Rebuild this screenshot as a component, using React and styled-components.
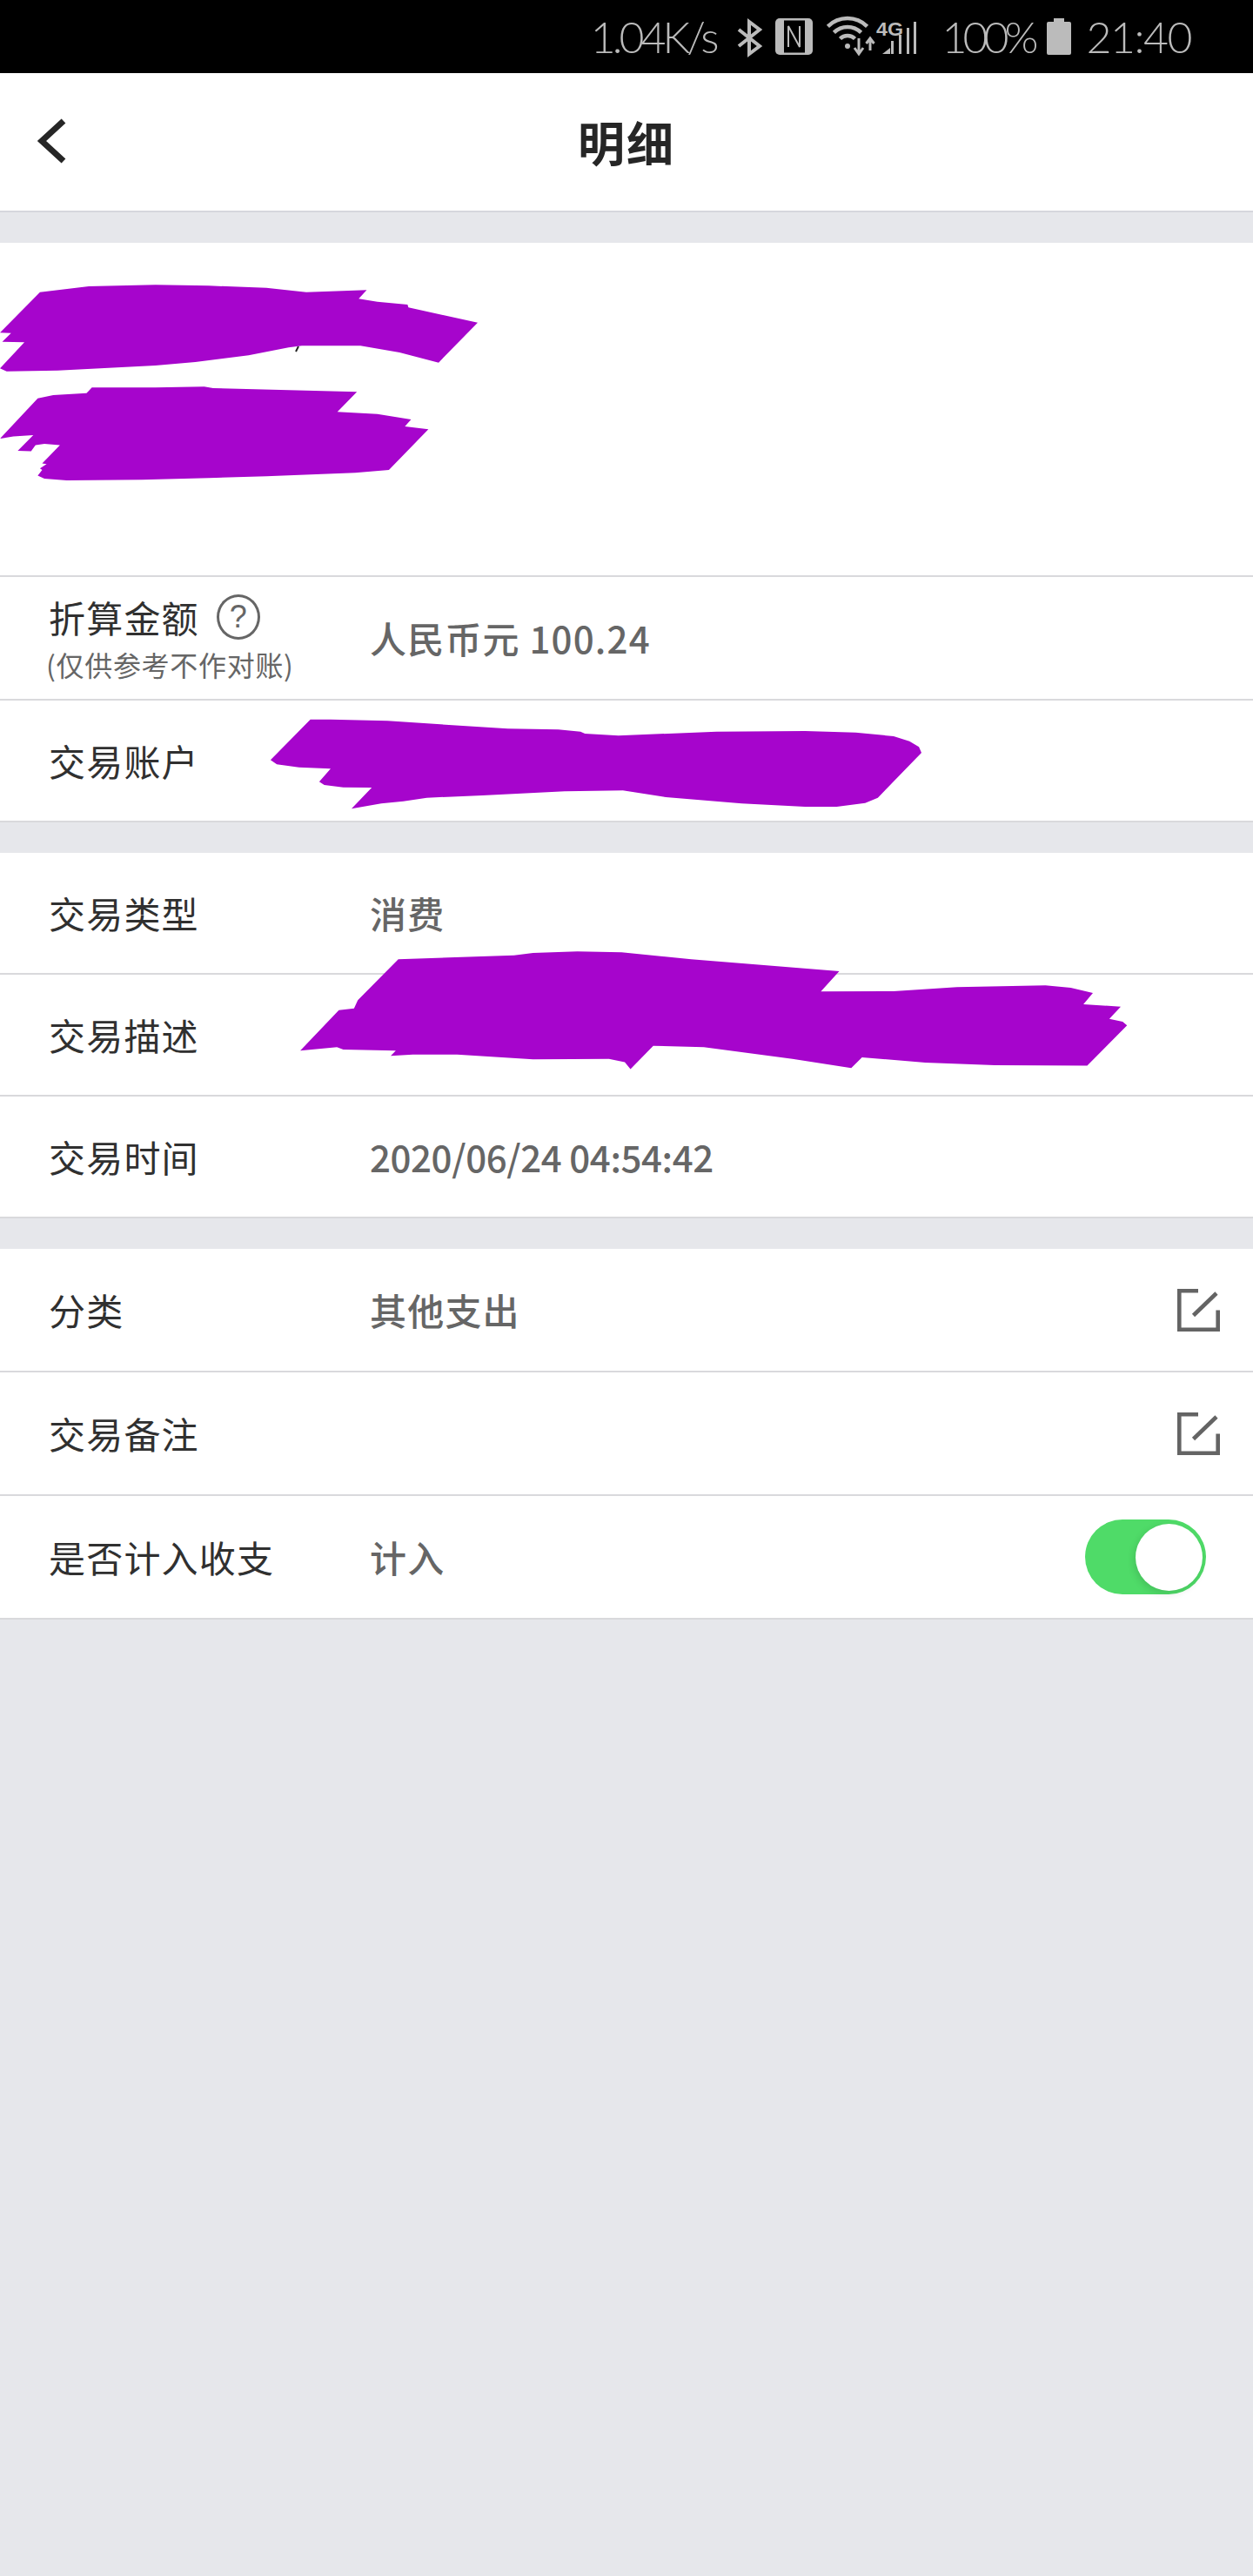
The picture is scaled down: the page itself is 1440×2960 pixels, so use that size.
import React from "react";
import styled, { createGlobalStyle } from "styled-components";

const GlobalStyle = createGlobalStyle`
  html, body { margin: 0; padding: 0; background: #e6e7eb; }
  * { box-sizing: border-box; }
`;

const CJK = `"Noto Sans CJK SC", "Noto Sans", sans-serif`;

const Page = styled.div`
  position: relative;
  width: 1440px;
  min-height: 2960px;
  background: #e6e7eb;
  font-family: ${CJK};
  overflow: hidden;
`;

const StatusBar = styled.div`
  display: flex;
  justify-content: flex-end;
  align-items: center;
  height: 84px;
  padding-right: 71px;
  background: #000;
  color: #bbb;
`;

const StatusText = styled.span`
  font-family: "Lato", "Open Sans", sans-serif;
  font-weight: 300;
  font-size: 50px;
  line-height: 84px;
  letter-spacing: ${(p) => p.$track}px;
  margin-left: ${(p) => p.$ml || 0}px;
  white-space: nowrap;
`;

const StatusIcon = styled.svg`
  display: block;
  flex: none;
  overflow: visible;
  margin-left: ${(p) => p.$ml || 0}px;
  margin-top: ${(p) => p.$mt || 0}px;
`;

const NavBar = styled.header`
  position: relative;
  display: flex;
  justify-content: center;
  align-items: center;
  height: 160px;
  background: #fff;
  border-bottom: 2px solid #d6d7dd;
`;

const BackIcon = styled.svg`
  position: absolute;
  left: 40px;
  top: 50px;
`;

const Title = styled.h1`
  margin: 0;
  font-size: 54px;
  line-height: 1;
  font-weight: 700;
  letter-spacing: 2px;
  color: #262626;
`;

const Section = styled.section`
  margin-top: 35px;
  background: #fff;
`;

const Blank = styled.div`
  height: 384px;
  border-bottom: 2px solid #d9d9dc;
`;

const Row = styled.div`
  display: flex;
  align-items: center;
  height: ${(p) => p.$h || 140}px;
  padding: 0 ${(p) => p.$pr || 0}px 0 56px;
  background: #fff;
  border-bottom: 2px solid #d9d9dc;
`;

const LabelCol = styled.div`
  display: flex;
  flex-direction: column;
  flex: none;
  width: 369px;
`;

const LabelLine = styled.div`
  display: flex;
  align-items: center;
  gap: 20px;
`;

const Label = styled.span`
  font-size: 42px;
  line-height: 52px;
  letter-spacing: 1.2px;
  color: #303030;
  white-space: nowrap;
`;

const Hint = styled.span`
  margin-left: -3px;
  margin-top: 8px;
  font-size: 32px;
  line-height: 40px;
  letter-spacing: 0.7px;
  color: #666;
  white-space: nowrap;
`;

const HelpBadge = styled.span`
  display: flex;
  align-items: center;
  justify-content: center;
  width: 50px;
  height: 52px;
  border: 3px solid #666;
  border-radius: 50%;
  font-family: "Liberation Sans", sans-serif;
  font-size: 36px;
  line-height: 1;
  color: #666;
`;

const Value = styled.span`
  font-size: 42px;
  line-height: 52px;
  font-weight: 500;
  letter-spacing: ${(p) => p.$track ?? 1.2}px;
  color: #666;
  white-space: nowrap;
`;

const Trailing = styled.div`
  display: flex;
  align-items: center;
  margin-left: auto;
`;

const Toggle = styled.div`
  display: flex;
  justify-content: flex-end;
  align-items: center;
  width: 139px;
  height: 86px;
  padding-right: 4px;
  border-radius: 43px;
  background: #4fdb68;
`;

const Knob = styled.div`
  width: 77px;
  height: 77px;
  border-radius: 50%;
  background: #fff;
  box-shadow: -2px 3px 8px rgba(0, 0, 0, 0.12);
`;

const ScribbleLayer = styled.svg`
  position: absolute;
  inset: 0;
  pointer-events: none;
`;

const EditIcon = () => (
  <svg width="49" height="49" viewBox="0 0 49 49" fill="none" stroke="#646464" strokeWidth="4.6">
    <path d="M24 2.3H2.3V46.7H46.7V24.5" />
    <path d="M18.5 30.5L45 5" />
  </svg>
);

const ToggleOn = () => (
  <Toggle>
    <Knob />
  </Toggle>
);

const top = [
  "90,767 200,747 350,742 470,745 600,752 690,767 826,760 808,790 850,800 918,810 920,820 1076,872 988,1010 900,975 812,952 680,952 650,958 560,985 440,1008 350,1020 130,1037 15,1040 0,1030 55,940 5,938 25,908 0,907",
  "85,1133 120,1122 195,1115 207,1096 350,1096 460,1093 480,1098 804,1111 760,1180 850,1187 926,1206 912,1230 965,1240 876,1380 800,1390 600,1402 470,1408 320,1414 150,1416 100,1410 85,1400 95,1380 90,1375 105,1360 95,1358 135,1295 100,1290 80,1295 70,1316 40,1314 75,1260 30,1265 0,1272",
];

const bottom = [
  "78,80 110,80 200,85 390,112 470,115 505,122 512,129 565,136 720,122 860,120 940,125 1000,138 1025,155 1040,175 1044,195 975,350 955,368 910,381 860,381 760,370 640,348 572,325 480,328 350,342 262,350 225,362 190,370 143,388 175,315 130,314 100,306 92,295 110,250 60,245 25,235 15,220",
  "217,907 400,893 430,885 500,880 570,883 680,907 914,948 885,1018 1000,1017 1100,1003 1240,997 1280,1005 1315,1023 1300,1062 1359,1070 1341,1112 1362,1122 1369,1135 1306,1274 1160,1272 1050,1263 950,1245 933,1282 840,1250 700,1210 620,1205 584,1286 575,1262 550,1250 430,1252 310,1235 240,1235 205,1240 213,1222 130,1218 120,1210 62,1222 123,1082 147,1076 153,1048",
];

const Scribbles = () => (
  <ScribbleLayer width="1440" height="2960" viewBox="0 0 1440 2960">
    <path d="M340 404L343 398" stroke="#222" strokeWidth="2" />
    <g transform="translate(0 80) scale(0.5102 0.3333)" fill="#a605cc">
      {top.map((p) => (
        <polygon key={p} points={p} />
      ))}
    </g>
    <g transform="translate(300 800) scale(0.7270 0.3333)" fill="#a605cc">
      {bottom.map((p) => (
        <polygon key={p} points={p} />
      ))}
    </g>
  </ScribbleLayer>
);

export default function App() {
  return (
    <Page>
      <GlobalStyle />
      <StatusBar>
        <StatusText $track={-4}>1.04K/s</StatusText>
        <StatusIcon $ml={24} $mt={3} width="28" height="39" viewBox="0 0 28 39" fill="none" stroke="#bbb" strokeWidth="4">
          <path d="M2 10L26 29L14 38V1L26 10L2 29" />
        </StatusIcon>
        <StatusIcon $ml={16} width="43" height="42" viewBox="0 0 43 42">
          <rect width="43" height="42" rx="5" fill="#bbb" />
          <rect x="10" y="2.5" width="24" height="37" fill="#000" />
          <path d="M15 33V9L28 33V9" fill="none" stroke="#bbb" strokeWidth="2" />
        </StatusIcon>
        <StatusIcon $ml={16} width="55" height="42" viewBox="0 0 55 42" fill="none" stroke="#bbb" strokeWidth="4.5">
          <path d="M1.4 9.4A32 32 0 0 1 46.6 9.4" />
          <path d="M8.4 16.4A22 22 0 0 1 39.6 16.4" />
          <path d="M15.5 23.5A12 12 0 0 1 32.5 23.5" />
          <circle cx="24" cy="32" r="3" fill="#bbb" stroke="none" />
          <path d="M37 23V40M32 34L37 41L42 34" strokeWidth="3" />
          <path d="M50 37V24M45.5 29L50 23L54.5 29" strokeWidth="3" />
        </StatusIcon>
        <StatusIcon $ml={2} width="48" height="40" viewBox="0 0 48 40" fill="#bbb">
          <text x="0" y="19" fontFamily="Liberation Sans, sans-serif" fontWeight="700" fontSize="22" textLength="31" lengthAdjust="spacingAndGlyphs">4G</text>
          <path d="M7 40L16 33V40Z" />
          <rect x="17" y="25" width="3" height="15" />
          <rect x="26" y="18" width="3" height="22" />
          <rect x="35" y="10" width="3" height="30" />
          <rect x="43" y="3" width="3" height="37" />
        </StatusIcon>
        <StatusText $ml={28} $track={-5}>100%</StatusText>
        <StatusIcon $ml={15} width="28" height="42" viewBox="0 0 28 42" fill="#bbb">
          <path d="M8 0H20V4H26A2 2 0 0 1 28 6V40A2 2 0 0 1 26 42H2A2 2 0 0 1 0 40V6A2 2 0 0 1 2 4H8Z" />
        </StatusIcon>
        <StatusText $ml={17} $track={-1.5}>21:40</StatusText>
      </StatusBar>

      <NavBar>
        <BackIcon width="36" height="56" viewBox="0 0 36 56" fill="none" stroke="#262626" strokeWidth="7">
          <path d="M33 5L8 28L33 51" />
        </BackIcon>
        <Title>明细</Title>
      </NavBar>

      <Section>
        <Blank />
        <Row $h={142}>
          <LabelCol>
            <LabelLine>
              <Label>折算金额</Label>
              <HelpBadge>?</HelpBadge>
            </LabelLine>
            <Hint>(仅供参考不作对账)</Hint>
          </LabelCol>
          <Value>人民币元 100.24</Value>
        </Row>
        <Row>
          <LabelCol>
            <Label>交易账户</Label>
          </LabelCol>
        </Row>
      </Section>

      <Section>
        <Row>
          <LabelCol>
            <Label>交易类型</Label>
          </LabelCol>
          <Value>消费</Value>
        </Row>
        <Row>
          <LabelCol>
            <Label>交易描述</Label>
          </LabelCol>
        </Row>
        <Row>
          <LabelCol>
            <Label>交易时间</Label>
          </LabelCol>
          <Value $track={-0.4}>2020/06/24 04:54:42</Value>
        </Row>
      </Section>

      <Section>
        <Row $h={142} $pr={38}>
          <LabelCol>
            <Label>分类</Label>
          </LabelCol>
          <Value>其他支出</Value>
          <Trailing>
            <EditIcon />
          </Trailing>
        </Row>
        <Row $h={142} $pr={38}>
          <LabelCol>
            <Label>交易备注</Label>
          </LabelCol>
          <Trailing>
            <EditIcon />
          </Trailing>
        </Row>
        <Row $h={142} $pr={54}>
          <LabelCol>
            <Label>是否计入收支</Label>
          </LabelCol>
          <Value>计入</Value>
          <Trailing>
            <ToggleOn />
          </Trailing>
        </Row>
      </Section>

      <Scribbles />
    </Page>
  );
}
